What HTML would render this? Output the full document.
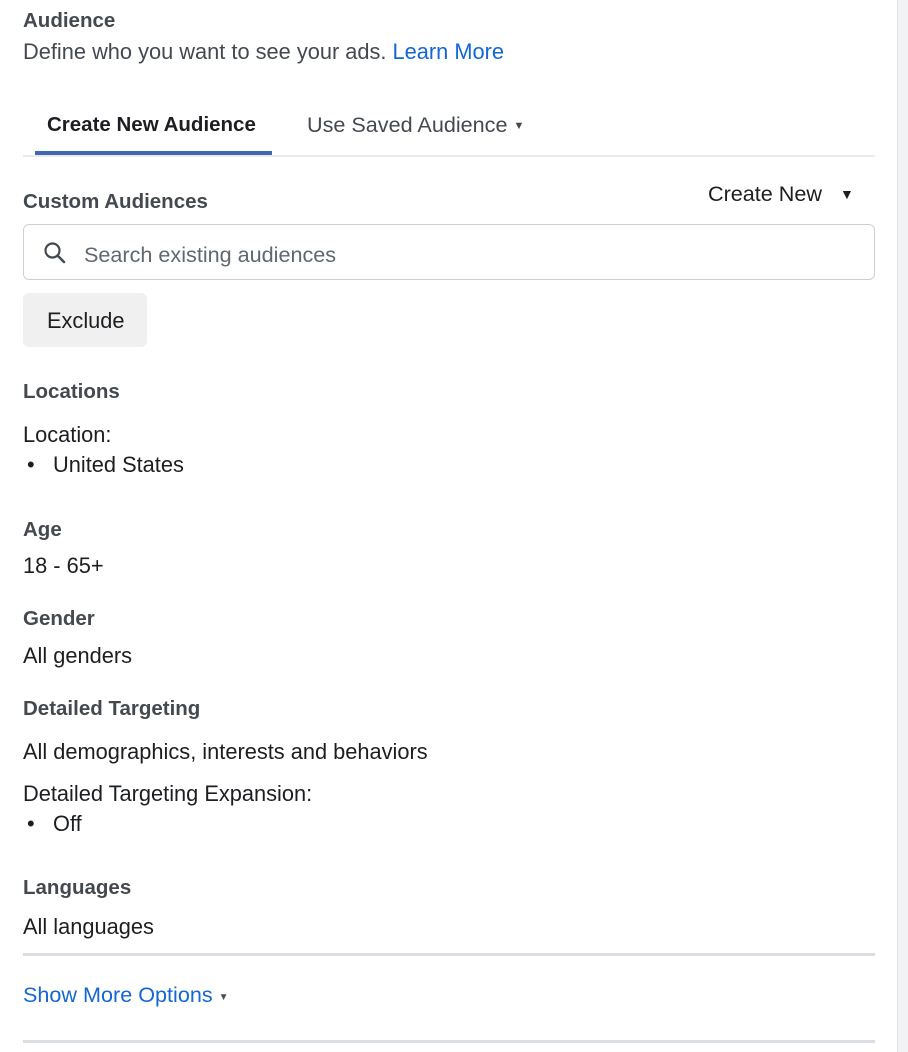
<!DOCTYPE html>
<html><head><style>
body{margin:0;width:908px;height:1052px;background:#fff;position:relative;overflow:hidden;font-family:"Liberation Sans",Arial,sans-serif;color:#1c1e21}
.a{position:absolute;white-space:nowrap}
.h{font-weight:bold;font-size:20.5px;color:#444950}
.t{font-size:21.8px;color:#1c1e21}
.line{position:absolute;left:23px;width:852px;background:#dadde1}
</style></head><body>
<div style="position:absolute;left:897px;top:0;width:11px;height:1052px;background:#f2f3f5;border-left:1px solid #e4e6eb"></div>
<div class="a h" style="left:23px;top:9px">Audience</div>
<div class="a t" style="left:23px;top:39px;color:#444950">Define who you want to see your ads. <span style="color:#1467d2">Learn More</span></div>
<div class="a" style="left:47px;top:113px;font-size:20.5px;font-weight:bold;color:#1c1e21">Create New Audience</div>
<div class="a" style="left:307px;top:112px;font-size:21.6px;color:#444950">Use Saved Audience <span style="font-size:11px;vertical-align:3px">▼</span></div>
<div class="line" style="top:155px;height:2px;background:#e9ebee"></div>
<div style="position:absolute;left:35px;top:151px;width:237px;height:4px;background:#4267b2"></div>
<div class="a h" style="left:23px;top:190px">Custom Audiences</div>
<div class="a" style="left:708px;top:181px;font-size:21.6px;color:#1c1e21">Create New <span style="font-size:14px;margin-left:12px;vertical-align:2px">▼</span></div>
<div style="position:absolute;left:23px;top:224px;width:850px;height:54px;border:1px solid #ccd0d5;border-radius:6px"></div>
<svg class="a" style="left:43px;top:241px" width="24" height="24" viewBox="0 0 24 24"><circle cx="9.5" cy="9.5" r="7" fill="none" stroke="#444950" stroke-width="2.2"/><path d="M14.5 14.5L21 21" stroke="#444950" stroke-width="2.4" stroke-linecap="round"/></svg>
<div class="a" style="left:84px;top:242px;font-size:21.6px;color:#606770">Search existing audiences</div>
<div style="position:absolute;left:23px;top:293px;width:124px;height:54px;background:#f0f0f0;border-radius:6px"></div>
<div class="a t" style="left:47px;top:308px">Exclude</div>
<div class="a h" style="left:23px;top:380px">Locations</div>
<div class="a t" style="left:23px;top:422px">Location:</div>
<div class="a t" style="left:27px;top:452px">•</div><div class="a t" style="left:53px;top:452px">United States</div>
<div class="a h" style="left:23px;top:518px">Age</div>
<div class="a t" style="left:23px;top:553px">18 - 65+</div>
<div class="a h" style="left:23px;top:607px">Gender</div>
<div class="a t" style="left:23px;top:643px">All genders</div>
<div class="a h" style="left:23px;top:697px">Detailed Targeting</div>
<div class="a t" style="left:23px;top:739px">All demographics, interests and behaviors</div>
<div class="a t" style="left:23px;top:781px">Detailed Targeting Expansion:</div>
<div class="a t" style="left:27px;top:811px">•</div><div class="a t" style="left:53px;top:811px">Off</div>
<div class="a h" style="left:23px;top:876px">Languages</div>
<div class="a t" style="left:23px;top:914px">All languages</div>
<div class="line" style="top:953px;height:3px"></div>
<div class="a" style="left:23px;top:982px;font-size:21.6px;color:#1467d2">Show More Options <span style="font-size:10px;color:#4b4f56;vertical-align:2px">▼</span></div>
<div class="line" style="top:1040px;height:3px"></div>
</body></html>
